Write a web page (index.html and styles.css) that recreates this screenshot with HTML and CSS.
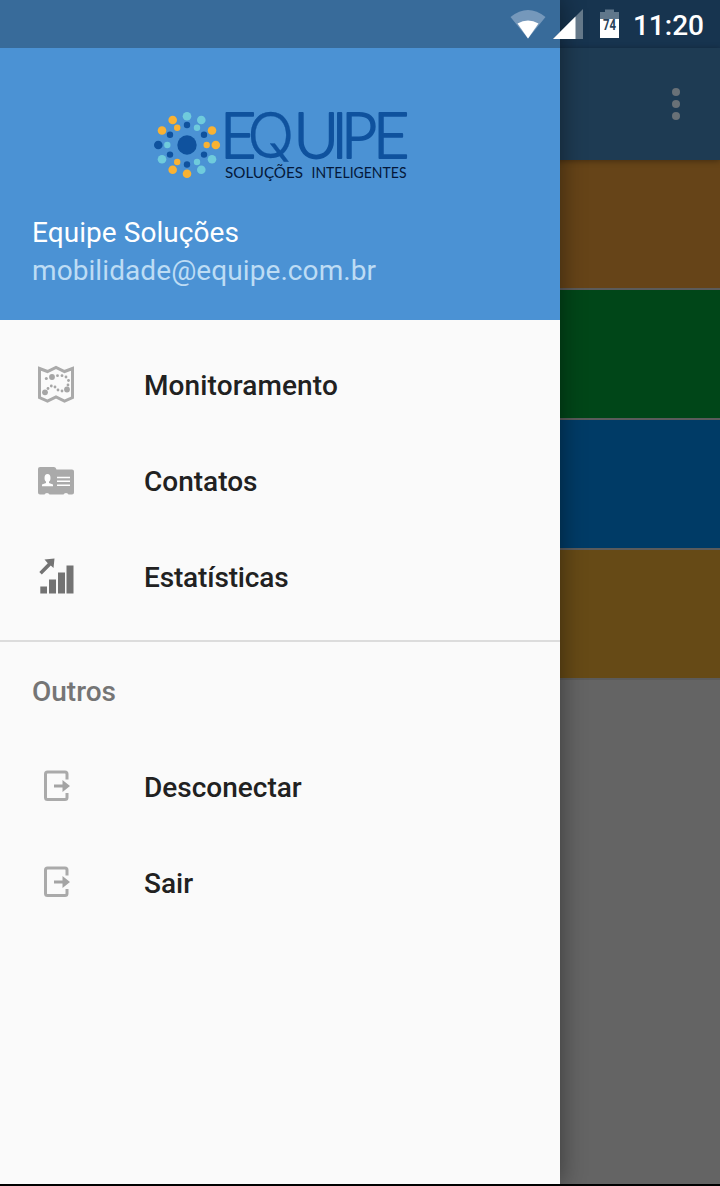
FILE: index.html
```html
<!DOCTYPE html>
<html lang="pt-BR">
<head>
<meta charset="utf-8">
<title>Equipe Soluções</title>
<link rel="stylesheet" href="styles.css">
</head>
<body>
<div class="screen">
  <main class="content">
    <div class="content-status"></div>
    <header class="appbar">
      <svg class="more" width="8" height="32" viewBox="0 0 8 32"><circle cx="4" cy="4" r="4"/><circle cx="4" cy="16" r="4"/><circle cx="4" cy="28" r="4"/></svg>
    </header>
    <div class="tile orange"></div>
    <div class="tile green"></div>
    <div class="tile blue"></div>
    <div class="tile gold"></div>
  </main>

  <aside class="drawer">
    <header class="profile">
      <svg class="logo" width="256" height="76" viewBox="152 108 256 76">
        <g fill="#0f529e">
          <circle cx="187" cy="145" r="9.7"/>
          <circle cx="158.300" cy="145" r="4.300"/>
          <circle cx="187" cy="125" r="3.200"/><circle cx="204" cy="134.800" r="3.200"/><circle cx="204" cy="154.600" r="3.200"/>
          <circle cx="187" cy="164.500" r="3.200"/><circle cx="170" cy="154.600" r="3.200"/><circle cx="170" cy="134.800" r="3.200"/>
        </g>
        <g fill="#6fcbdc">
          <circle cx="187" cy="116.200" r="4.300"/><circle cx="201.300" cy="120" r="4.300"/><circle cx="212" cy="159.300" r="4.300"/>
          <circle cx="201.300" cy="169.700" r="4.300"/><circle cx="162" cy="159.300" r="4.300"/>
          <circle cx="197" cy="127.800" r="3.200"/><circle cx="197" cy="162" r="3.200"/><circle cx="167.300" cy="145" r="3.200"/>
        </g>
        <g fill="#f9b233">
          <circle cx="172.700" cy="120" r="4.300"/><circle cx="162" cy="130.500" r="4.300"/><circle cx="212" cy="130.500" r="4.300"/>
          <circle cx="215.800" cy="145" r="4.300"/><circle cx="187" cy="173.700" r="4.300"/><circle cx="172.700" cy="169.700" r="4.300"/>
          <circle cx="177.200" cy="127.800" r="3.200"/><circle cx="177.200" cy="162" r="3.200"/><circle cx="206.700" cy="145" r="3.200"/>
        </g>
        <text class="brand" y="158" x="220 247 293.500 331.500 341 373">E<tspan class="round">Q</tspan>UIPE</text>
        <text class="tagline" x="225" y="177.500" textLength="78" lengthAdjust="spacingAndGlyphs">SOLUÇÕES</text>
        <text class="tagline" x="311.500" y="177.500" textLength="95" lengthAdjust="spacingAndGlyphs">INTELIGENTES</text>
      </svg>
      <div class="name">Equipe Soluções</div>
      <div class="email">mobilidade@equipe.com.br</div>
    </header>

    <nav class="menu">
      <a class="item">
        <svg class="icon" viewBox="0 0 48 48">
          <path d="M7.500 8.500 15.500 11.500l8.500-4 8.500 4 8-3v29l-8 3.500-8.500-4-8.500 4-8-3.500z" fill="none" stroke="#aaa" stroke-width="3"/>
          <g fill="#a6a6a6"><circle cx="20" cy="17" r="2.900"/><circle cx="13" cy="32.300" r="2.900"/><circle cx="35" cy="29.500" r="2.900"/>
          <circle cx="14.300" cy="18.500" r="1.500"/><circle cx="25.500" cy="15.700" r="1.400"/><circle cx="30" cy="15.700" r="1.400"/><circle cx="34" cy="17" r="1.400"/><circle cx="36.500" cy="20.500" r="1.400"/><circle cx="36" cy="25" r="1.400"/>
          <circle cx="16" cy="28.500" r="1.400"/><circle cx="19.300" cy="26" r="1.400"/><circle cx="23" cy="27" r="1.400"/><circle cx="26" cy="30" r="1.400"/><circle cx="30" cy="31" r="1.400"/></g>
        </svg>
        <span class="wide">Monitoramento</span>
      </a>
      <a class="item">
        <svg class="icon" viewBox="0 0 48 48">
          <path d="M8 11h14q2 0 2.500 2.500h15.500q2 0 2 2v21q0 2-2 2h-3.500q-.5-1.500-2.500-1.500t-2.500 1.500H17.500q-.5-1.500-2.500-1.500t-2.500 1.500H8q-2 0-2-2V13q0-2 2-2z" fill="#aaa"/>
          <ellipse cx="15.500" cy="22" rx="3" ry="3.900" fill="#fff"/><path d="M14 24h3v3l4 1.500v1.700H10v-1.700l4-1.500z" fill="#fff"/>
          <path d="M25 21.500h13M25 25.300h13M25 29.200h13" stroke="#fff" stroke-width="1.500"/>
        </svg>
        <span>Contatos</span>
      </a>
      <a class="item">
        <svg class="icon" viewBox="0 0 48 48" fill="#737373">
          <path d="M8.300 34.500h6.700v7H8.300zM17 27.500h7v14h-7zM26 20.500h7v21h-7zM34.500 13.500h7v28h-7zM12.500 7.500l10-1-1 9.500-2.700-2.500-9 9-2.500-2.500 8.500-8.700z"/>
        </svg>
        <span class="tight">Estatísticas</span>
      </a>
    </nav>
    <nav class="menu others">
      <h2 class="subheader">Outros</h2>
      <a class="item">
        <svg class="icon" viewBox="0 0 48 48">
          <path d="M35 17.500V12q0-2-2-2H15.500q-2 0-2 2v23.500q0 2 2 2H33q2 0 2-2V31" fill="none" stroke="#aaa" stroke-width="3"/>
          <path d="M22 22.500h8.500v-4.500l7.500 6-7.500 6v-4.500H22z" fill="#a4a4a4"/>
        </svg>
        <span>Desconectar</span>
      </a>
      <a class="item">
        <svg class="icon" viewBox="0 0 48 48">
          <path d="M35 17.500V12q0-2-2-2H15.500q-2 0-2 2v23.500q0 2 2 2H33q2 0 2-2V31" fill="none" stroke="#aaa" stroke-width="3"/>
          <path d="M22 22.500h8.500v-4.500l7.500 6-7.500 6v-4.500H22z" fill="#a4a4a4"/>
        </svg>
        <span>Sair</span>
      </a>
    </nav>
  </aside>

  <div class="statusbar">
    <svg class="signals" width="112" height="32" viewBox="510 8 112 32">
      <path d="M510.500 17Q528 3 545.500 17L528 38.500z" fill="#7598bb"/>
      <path d="M517.500 23.500Q528 17.500 538.500 23.500L528 38.500z" fill="#fff"/>
      <path d="M583 9v30h-30z" fill="#647889"/>
      <path d="M575.500 16.500V39H553z" fill="#fff"/>
      <path d="M600 19v-7h5V9.500h9V12h5v7z" fill="#60778b"/>
      <path d="M600 19h19v19h-19z" fill="#fff"/>
      <text class="charge" x="603" y="29.500" textLength="13" lengthAdjust="spacingAndGlyphs">74</text>
    </svg>
    <span class="clock">11:20</span>
  </div>
</div>
</body>
</html>
```
FILE: styles.css
```css
* { box-sizing: border-box; }
body { margin: 0; font-family: Roboto, "Noto Sans", sans-serif; }
.screen {
  position: relative;
  width: 720px;
  height: 1186px;
  overflow: hidden;
  background: #646464;
  border-bottom: 2px solid #000;
}
.content-status { height: 48px; background: #17344f; }
.appbar {
  position: relative;
  display: flex;
  align-items: center;
  justify-content: flex-end;
  height: 112px;
  padding-right: 40px;
  background: #1e3b53;
  box-shadow: 0 1px 6px rgba(0, 0, 0, .35);
}
.more { fill: #697177; }
.tile { height: 130px; border-bottom: 2px solid #5b5b5b; }
.orange { background: #664418; }
.green { background: #004618; }
.blue { background: #003b66; }
.gold { background: #664a16; }

.drawer {
  position: absolute;
  top: 0;
  left: 0;
  width: 560px;
  height: 1184px;
  background: #fafafa;
  box-shadow: 0 0 24px rgba(0, 0, 0, .45);
}
.profile {
  display: flex;
  flex-direction: column;
  height: 320px;
  padding: 108px 32px 0;
  background: #4b92d4;
  font-size: 28px;
  line-height: 38px;
}
.logo { display: block; align-self: center; margin-bottom: 30px; overflow: visible; }
.brand { font: 300 62.500px Lato, sans-serif; fill: #0f529e; stroke: #0f529e; stroke-width: 2px; stroke-linejoin: round; }
.round { font-family: Inter, sans-serif; stroke-width: .3px; }
.tagline { font: 400 16px Lato, sans-serif; fill: #04183a; }
.name { color: #fff; letter-spacing: .06px; }
.email { color: #bddcf4; letter-spacing: .08px; }

.menu { padding: 16px 0; }
.others { padding-top: 0; border-top: 2px solid #dcdcdc; }
.item {
  display: flex;
  align-items: center;
  gap: 64px;
  height: 96px;
  padding: 0 32px;
  color: #212121;
  font-size: 28px;
  font-weight: 500;
}
.item span { padding-top: 2px; }
.wide { letter-spacing: .12px; }
.tight { letter-spacing: -.15px; }
.icon { width: 48px; height: 48px; flex: none; }
.subheader {
  height: 96px;
  margin: 0;
  padding: 2px 32px 0;
  color: #757575;
  font-size: 28px;
  font-weight: 500;
  line-height: 96px;
}

.statusbar {
  position: absolute;
  top: 0;
  left: 0;
  display: flex;
  align-items: center;
  justify-content: flex-end;
  gap: 11px;
  width: 720px;
  height: 48px;
  padding-right: 16px;
  background: linear-gradient(90deg, #386b9a 560px, transparent 560px);
}
.charge { font: 700 15px Roboto, sans-serif; fill: #29435a; }
.clock { color: #fff; font-size: 28px; font-weight: 500; line-height: 48px; padding-top: 3px; }
```
